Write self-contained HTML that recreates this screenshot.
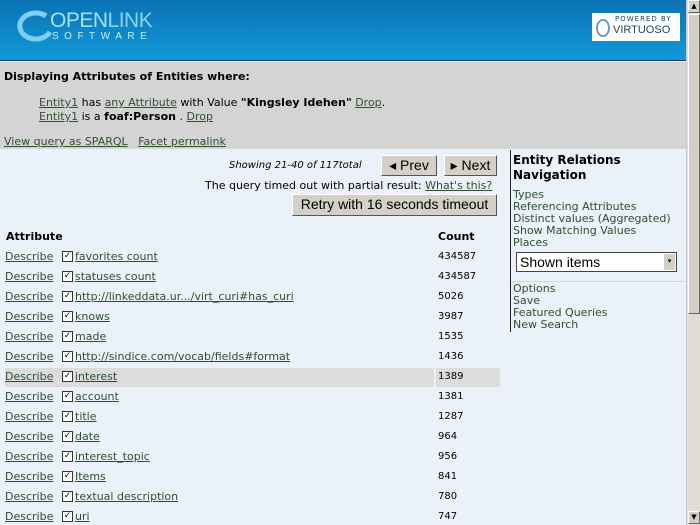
<!DOCTYPE html>
<html><head><meta charset="utf-8"><style>
*{margin:0;padding:0;box-sizing:border-box}
body{width:700px;height:525px;overflow:hidden;background:#eaf1f8;font-family:"DejaVu Sans","Liberation Sans",sans-serif;font-size:11px;color:#000;position:relative}
a{color:#2f4f2f;text-decoration:underline}
.abs{position:absolute;white-space:nowrap}
#hdr{position:absolute;left:0;top:0;width:686px;height:61px;background:linear-gradient(#0a72b4,#129ad8);border-bottom:1px solid #0b3d66}
#gray{position:absolute;left:0;top:62px;width:686px;height:87px;background:#d4d4d4}
#sb{position:absolute;right:0;top:0;width:14px;height:525px;background:#e0ddd6;border-left:1px solid #ccc}
.sbb{position:absolute;left:1px;width:12px;height:13px;background:#d4d0c8;border:1px solid #fff;border-right-color:#666;border-bottom-color:#666;font-size:7px;text-align:center;line-height:11px}
.btn{position:absolute;background:#d4d0c8;border:1px solid #fff;border-right-color:#555;border-bottom-color:#555;font-family:"Liberation Sans",sans-serif;font-size:14px;line-height:18px;text-align:center}
.cb{position:absolute;width:11px;height:11px;border:1px solid #333;background:#fff;font-size:9px;line-height:9px;text-align:center;font-weight:bold}
.side a{color:#2f4f2f;text-decoration:none;display:block;line-height:12px}
</style></head><body>
<div id="hdr">
 <svg class="abs" style="left:16px;top:10px" width="40" height="34"><path d="M30 6 A16 13 0 1 0 34 22" fill="none" stroke="#7fd0f0" stroke-width="5"/></svg>
 <div class="abs" style="left:50px;top:9px;color:#a8e0f8;font-family:'Liberation Sans',sans-serif;font-size:21px;letter-spacing:-0.5px">OPEN<span style="color:#8ad4f4">LINK</span></div>
 <div class="abs" style="left:52px;top:31px;color:#c8ecfa;font-family:'Liberation Sans',sans-serif;font-size:10px;letter-spacing:5.5px">SOFTWARE</div>
 <div class="abs" style="left:592px;top:13px;width:88px;height:28px;background:#fff">
  <div class="abs" style="left:23px;top:2px;font-size:7px;letter-spacing:1px;color:#245">POWERED BY</div>
  <div class="abs" style="left:21px;top:11px;font-size:11px;color:#245;font-family:'Liberation Sans',sans-serif">VIRTUOSO</div>
  <div class="abs" style="left:4px;top:6px;width:14px;height:18px;border:2px solid #6b9ac4;border-radius:50%"></div>
 </div>
</div>
<div id="gray">
 <div class="abs" style="left:4px;top:8px;font-weight:bold;font-size:11px">Displaying Attributes of Entities where:</div>
 <div class="abs" style="left:39px;top:34px;font-size:11px"><a href="#">Entity1</a> has <a href="#">any Attribute</a> with Value <b>"Kingsley Idehen"</b> <a href="#">Drop</a>.</div>
 <div class="abs" style="left:39px;top:48px;font-size:11px"><a href="#">Entity1</a> is a <b>foaf:Person</b> . <a href="#">Drop</a></div>
 <div class="abs" style="left:4px;top:73px;font-size:11px"><a href="#">View query as SPARQL</a>&nbsp;&nbsp; <a href="#">Facet permalink</a></div>
</div>
<div class="abs" style="left:229px;top:160px;font-style:italic;font-size:10px">Showing 21-40 of 117total</div>
<div class="btn" style="left:381px;top:155px;width:56px;height:21px">◂ Prev</div>
<div class="btn" style="left:444px;top:155px;width:53px;height:21px">▸ Next</div>
<div class="abs" style="left:205px;top:179px">The query timed out with partial result: <a href="#">What's this?</a></div>
<div class="btn" style="left:292px;top:194px;width:205px;height:22px">Retry with 16 seconds timeout</div>
<div class="abs" style="left:6px;top:230px;font-weight:bold">Attribute</div>
<div class="abs" style="left:438px;top:230px;font-weight:bold">Count</div>
<div class="abs" style="left:5px;top:368px;width:495px;height:19px;background:#dcdcdc"></div>
<div class="abs" style="left:434px;top:368px;width:2px;height:19px;background:#eaf1f8"></div>
<div id="rows"></div>
<div class="abs" style="left:510px;top:150px;width:1px;height:182px;background:#222"></div>
<div class="side abs" style="left:513px;top:153px">
 <div style="font-weight:bold;font-size:12px;line-height:15px">Entity Relations<br>Navigation</div>
 <div style="height:6px"></div>
 <a href="#">Types</a><a href="#">Referencing Attributes</a><a href="#">Distinct values (Aggregated)</a><a href="#">Show Matching Values</a><a href="#">Places</a>
</div>
<div class="abs" style="left:516px;top:252px;width:161px;height:20px;background:#fff;border:1px solid #444;font-family:'Liberation Sans',sans-serif;font-size:14px;line-height:18px;padding-left:3px">Shown items<div style="position:absolute;right:1px;top:1px;width:11px;height:16px;background:#d4d0c8;font-size:7px;text-align:center;line-height:16px">▾</div></div>
<div class="abs" style="left:511px;top:281px;width:175px;height:1px;background:#d0d8e0"></div>
<div class="side abs" style="left:513px;top:283px"><a href="#">Options</a><a href="#">Save</a><a href="#">Featured Queries</a><a href="#">New Search</a></div>
<div id="sb"><div class="sbb" style="top:0">▲</div><div style="position:absolute;left:1px;top:14px;width:12px;height:300px;background:#d4d0c8;border:1px solid #fff;border-right-color:#666;border-bottom-color:#666"></div><div class="sbb" style="top:511px">▼</div></div>
<script>
var d=[["favorites count",434587],["statuses count",434587],["http://linkeddata.ur.../virt_curi#has_curi",5026],["knows",3987],["made",1535],["http://sindice.com/vocab/fields#format",1436],["interest",1389],["account",1381],["title",1287],["date",964],["interest_topic",956],["Items",841],["textual description",780],["uri",747]];
var h="";d.forEach(function(r,i){var y=250+i*20;
h+='<div class="abs" style="left:5px;top:'+y+'px"><a href="#">Describe</a></div><div class="cb" style="left:62px;top:'+(y+1)+'px">✓</div><div class="abs" style="left:75px;top:'+y+'px"><a href="#">'+r[0]+'</a></div><div class="abs" style="left:438px;top:'+(y+1)+'px;font-size:10px">'+r[1]+'</div>';});
document.getElementById("rows").innerHTML=h;
</script>
</body></html>
